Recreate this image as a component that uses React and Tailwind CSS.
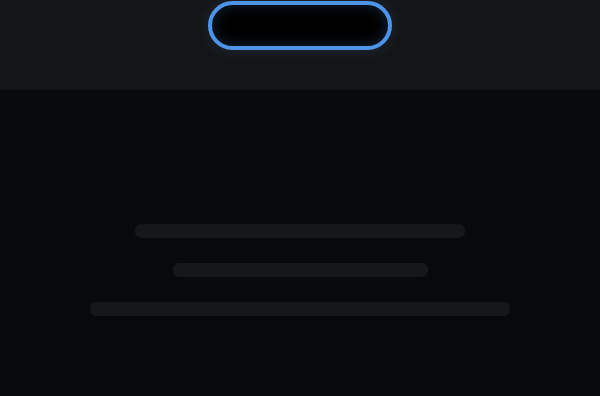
export default function App() {
  return (
    <div className="w-[600px] h-[396px] flex flex-col bg-[#08090b] overflow-hidden">
      <div className="h-[90px] bg-[#141517] flex justify-center items-start pt-px shrink-0">
        <div className="w-[184px] h-[49px] rounded-full border-4 border-[#4f94e6] bg-black shadow-[0_0_14px_rgba(79,148,230,0.18),inset_0_0_14px_rgba(79,148,230,0.25)]"></div>
      </div>
      <div className="flex-1 flex flex-col items-center pt-[134px] gap-[25px]">
        <div className="w-[330px] h-[14px] rounded-[6px] bg-[#161719]"></div>
        <div className="w-[255px] h-[14px] rounded-[6px] bg-[#161719]"></div>
        <div className="w-[420px] h-[14px] rounded-[6px] bg-[#161719]"></div>
      </div>
    </div>
  );
}
